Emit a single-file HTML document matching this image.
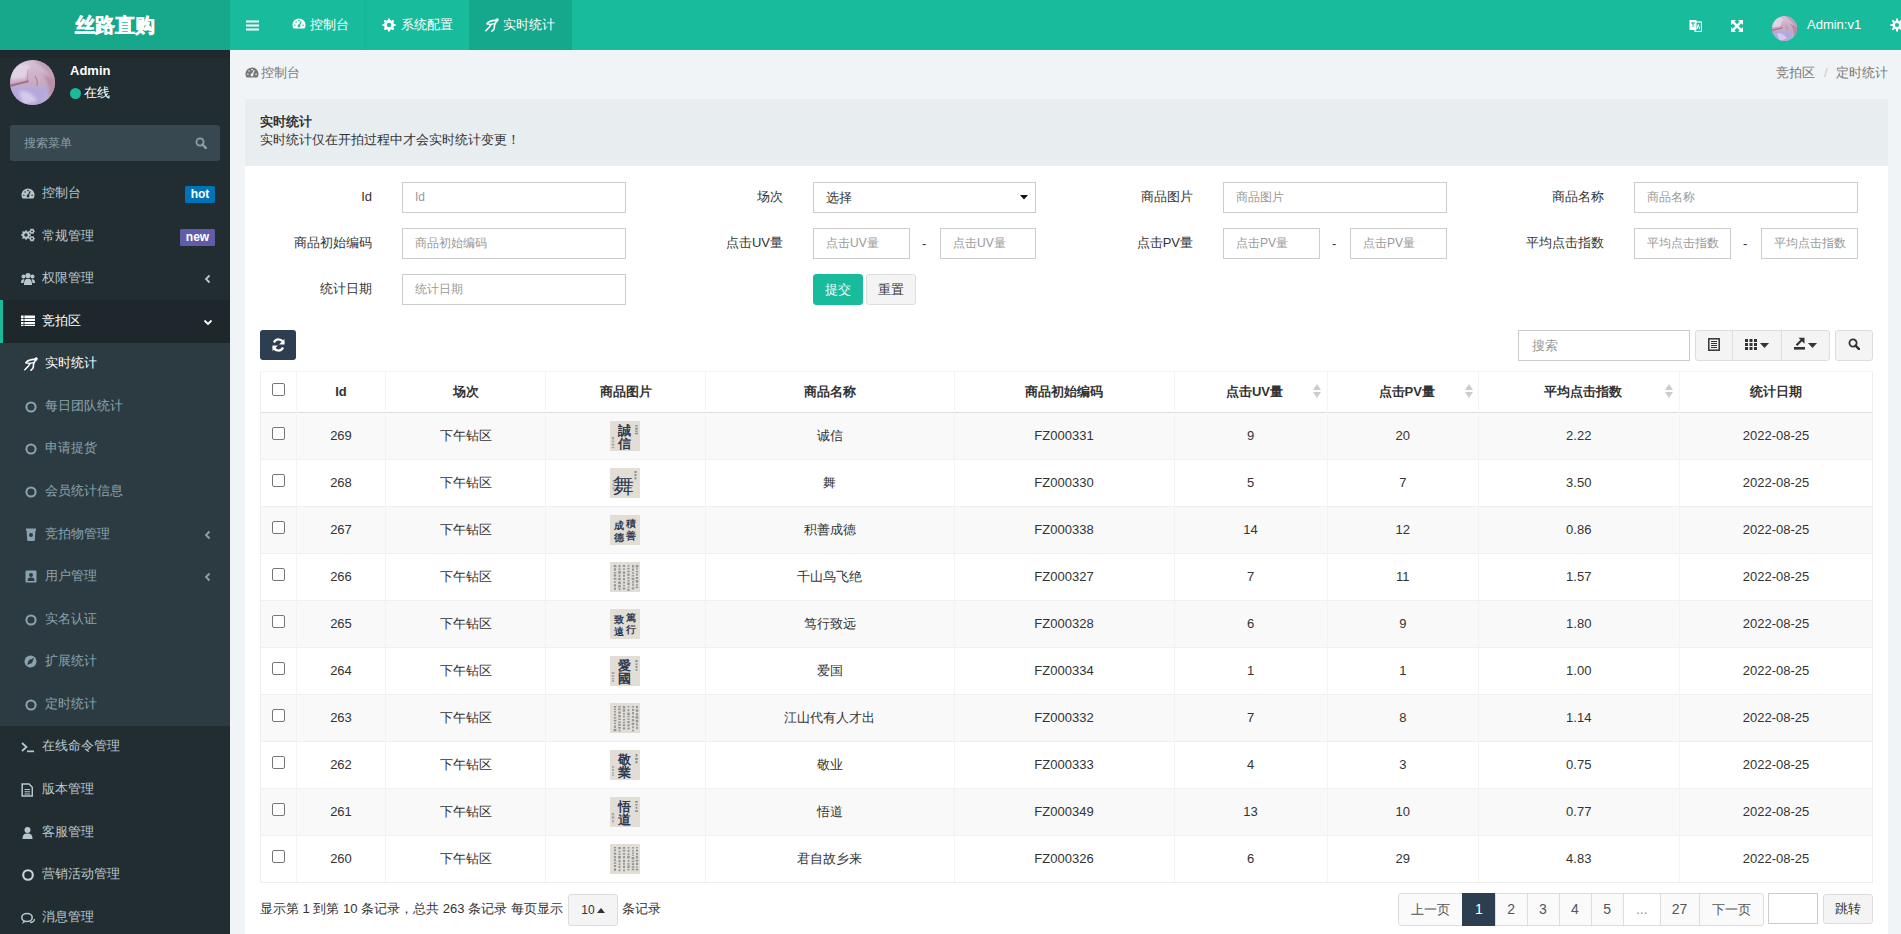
<!DOCTYPE html>
<html><head><meta charset="utf-8">
<style>
*{box-sizing:border-box}
html,body{margin:0;padding:0;width:1901px;height:934px;overflow:hidden}
body{font-family:"Liberation Sans",sans-serif;font-size:13px;color:#333;background:#f1f4f6;position:relative}
.abs{position:absolute}
svg{display:block}
#header{left:0;top:0;width:1901px;height:50px;background:#18bc9c}
#logo{left:0;top:0;width:230px;height:50px;background:#17a88b;color:#fff;font-size:20px;font-weight:bold;-webkit-text-stroke:0.5px #fff;text-align:center;line-height:50px;letter-spacing:0px}
.navt{top:0;height:50px;line-height:50px;color:#fff;font-size:13px;white-space:nowrap}
#sidebar{left:0;top:50px;width:230px;height:884px;background:#222d32}
.mi{left:0;width:230px;height:42.57px;line-height:42.57px;color:#b8c7ce;white-space:nowrap}
.mi .t{position:absolute;left:42px;top:0}
.mi .ic{position:absolute;left:21px;top:15px}
.sub .t{left:45px;color:#8aa4af}
.sub .ic{left:24px}
.badge{position:absolute;height:17px;line-height:17px;font-size:12px;font-weight:bold;color:#fff;text-align:center;border-radius:1.5px;top:14px}
.chev{position:absolute;left:204px;top:17px}
#content{left:230px;top:50px;width:1671px;height:884px;background:#f1f4f6}
.lbl{height:31px;line-height:30px;text-align:right;color:#333;white-space:nowrap}
.inp{height:31px;border:1px solid #ccc;background:#fff;line-height:29px;padding-left:12px;color:#999;font-size:12px;white-space:nowrap;overflow:hidden}
.dash{line-height:31px;height:31px;color:#333}
.tbl{border:1px solid #eee;border-top-color:#f4f4f4;background:#fff}
.vl{width:1px;background:#f3f3f3}
.cb{width:13px;height:13px;border:1px solid #767676;border-radius:2px;background:#fff}
.th{height:40px;line-height:40px;text-align:center;font-weight:bold;color:#333;white-space:nowrap}
.td{height:46px;line-height:46px;text-align:center;color:#333;white-space:nowrap}
.sorti{width:10px;height:16px}
.sorti:before{content:"";position:absolute;left:1px;top:1px;border-left:4.5px solid transparent;border-right:4.5px solid transparent;border-bottom:6px solid #ccc}
.sorti:after{content:"";position:absolute;left:1px;top:9px;border-left:4.5px solid transparent;border-right:4.5px solid transparent;border-top:6px solid #ccc}
.thumb{width:30px;height:30px;background:#dcd8cf;color:#2d3a55;font-family:"Liberation Serif",serif;font-weight:bold;text-align:center;overflow:hidden}
.thumb.big2{font-size:13px;line-height:13px;padding-top:2px}
.thumb.big1{font-size:24px;line-height:30px}
.thumb.grid{font-size:9px;line-height:11px;padding-top:4px;letter-spacing:2px}
.thumb.small,.thumb.small2{background:#d9d6d0 repeating-linear-gradient(90deg,transparent 0 4px,rgba(40,50,70,.45) 4px 5px,transparent 5px 7px)}
.btn{height:31px;line-height:29px;text-align:center;border:1px solid #ddd;background:#f4f4f4;color:#333;border-radius:3px}
.pg{top:893px;height:33px;line-height:31px;text-align:center;border:1px solid #ddd;background:#fafafa;color:#555;font-size:14px}

</style></head><body>
<div id="header" class="abs">
<div id="logo" class="abs">丝路直购</div>
<svg class="abs" style="left:246px;top:20px" width="13" height="11" viewBox="0 0 13 11"><rect x="0" y="0.5" width="13" height="2" fill="#fff"/><rect x="0" y="4.5" width="13" height="2" fill="#fff"/><rect x="0" y="8.5" width="13" height="2" fill="#fff"/></svg>
<div class="abs" style="left:365px;top:0;width:1px;height:50px;background:rgba(0,0,0,0.04)"></div>
<div class="abs" style="left:469px;top:0;width:103px;height:50px;background:rgba(0,0,0,0.1)"></div>
<svg class="abs" style="left:292px;top:18px" width="14" height="11" viewBox="0 0 14 11"><path fill="#fff" d="M1.52,10.5 A6.5,6.5 0 1 1 12.48,10.5 Z"/><circle cx="7" cy="8" r="1.4" fill="#18bc9c"/><path d="M7,8 L9.2,3.2" stroke="#18bc9c" stroke-width="1.2"/><circle cx="2.9" cy="7.3" r="0.8" fill="#18bc9c"/><circle cx="4.1" cy="4" r="0.8" fill="#18bc9c"/><circle cx="7" cy="2.6" r="0.8" fill="#18bc9c"/><circle cx="11.1" cy="7.3" r="0.8" fill="#18bc9c"/></svg>
<div class="abs navt" style="left:310px">控制台</div>
<svg class="abs" style="left:382px;top:18px" width="14" height="14" viewBox="0 0 14 14"><path fill="#fff" fill-rule="evenodd" d="M11.98,5.91 L13.54,6.10 L13.54,7.90 L11.98,8.09 L11.30,9.75 L12.26,10.98 L10.98,12.26 L9.75,11.30 L8.09,11.98 L7.90,13.54 L6.10,13.54 L5.91,11.98 L4.25,11.30 L3.02,12.26 L1.74,10.98 L2.70,9.75 L2.02,8.09 L0.46,7.90 L0.46,6.10 L2.02,5.91 L2.70,4.25 L1.74,3.02 L3.02,1.74 L4.25,2.70 L5.91,2.02 L6.10,0.46 L7.90,0.46 L8.09,2.02 L9.75,2.70 L10.98,1.74 L12.26,3.02 L11.30,4.25Z M9.20,7.00 A2.2,2.2 0 1 0 4.80,7.00 A2.2,2.2 0 1 0 9.20,7.00Z"/></svg>
<div class="abs navt" style="left:401px">系统配置</div>
<svg class="abs" style="left:485px;top:18px" width="14" height="14" viewBox="0 0 14 14"><path d="M2,5.8 C3.6,3.4 6.4,2.4 10.6,2.4" fill="none" stroke="#fff" stroke-width="1.6" stroke-linecap="round"/><path d="M10.2,1.6 L12.4,0 L14,1.8 L12.2,4.2 Z" fill="#fff"/><path d="M11.4,3.4 C10.2,5.6 9,6.8 9.4,8.8 C9.6,10.6 8.6,12 7,13.2" fill="none" stroke="#fff" stroke-width="1.6" stroke-linecap="round"/><path d="M6.2,6.4 C5,8.6 3.2,10.6 0.8,12.8" fill="none" stroke="#fff" stroke-width="1.5" stroke-linecap="round"/><path d="M2,5.8 C4.4,6.6 6.8,6.4 9.6,5.6" fill="none" stroke="#fff" stroke-width="1.2" stroke-linecap="round"/></svg>
<div class="abs navt" style="left:503px">实时统计</div>
<svg class="abs" style="left:1689px;top:19px" width="13" height="13" viewBox="0 0 13 13"><rect x="0.5" y="1" width="7" height="10" fill="#fff"/><rect x="6" y="3" width="6.5" height="9.5" fill="none" stroke="#fff" stroke-width="1.2"/><path d="M2,4 h4 M4,3 v5" stroke="#18bc9c" stroke-width="1"/><path d="M8,10 L9.3,5.5 L10.6,10" stroke="#fff" stroke-width="1" fill="none"/></svg>
<svg class="abs" style="left:1731px;top:20px" width="12" height="12" viewBox="0 0 12 12"><path d="M2.2,2.2 L9.8,9.8 M9.8,2.2 L2.2,9.8" stroke="#fff" stroke-width="2.4"/><path fill="#fff" d="M0,0 H5 L0,5Z M12,0 V5 L7,0Z M0,12 V7 L5,12Z M12,12 H7 L12,7Z"/></svg>
<svg class="abs" style="left:1772px;top:15.5px" width="25" height="25" viewBox="0 0 100 100"><defs><clipPath id="a2"><circle cx="50" cy="50" r="50"/></clipPath><filter id="a2f"><feGaussianBlur stdDeviation="3"/></filter><linearGradient id="a2g" x1="0" y1="0" x2="0" y2="1"><stop offset="0" stop-color="#d6c2d8"/><stop offset="0.5" stop-color="#c9aac2"/><stop offset="0.65" stop-color="#b8acd6"/><stop offset="1" stop-color="#c0b4de"/></linearGradient></defs><g clip-path="url(#a2)"><rect width="100" height="100" fill="url(#a2g)"/><g filter="url(#a2f)"><path d="M50,0 C75,15 92,35 100,65 L100,0Z" fill="#c59cb2"/><path d="M70,30 C85,45 90,65 85,95 L100,100 L100,45Z" fill="#b98ca6"/><path d="M5,15 C20,5 40,5 45,15 L35,40 L0,45Z" fill="#e2d2e6"/><path d="M0,62 C30,58 55,66 80,62 L75,100 L0,100Z" fill="#b5a8dc"/><path d="M20,70 C35,65 50,75 60,90 L30,100Z" fill="#d4cbea"/></g><path d="M0,55 L40,45 L42,49 L0,60Z" fill="#9a6374" opacity="0.8"/><path d="M55,35 C60,42 62,50 60,58" fill="none" stroke="#a07084" stroke-width="2.5" opacity="0.7"/><path d="M40,20 L38,50" stroke="#8d6a7a" stroke-width="1.5" opacity="0.6"/></g></svg>
<div class="abs navt" style="left:1807px;font-size:13px">Admin:v1</div>
<svg class="abs" style="left:1890px;top:18px" width="15" height="14" viewBox="0 0 15 14"><path fill="#fff" fill-rule="evenodd" d="M11.49,6.01 L13.54,6.10 L13.54,7.90 L11.49,7.99 L10.87,9.48 L12.26,10.98 L10.98,12.26 L9.48,10.87 L7.99,11.49 L7.90,13.54 L6.10,13.54 L6.01,11.49 L4.52,10.87 L3.02,12.26 L1.74,10.98 L3.13,9.48 L2.51,7.99 L0.46,7.90 L0.46,6.10 L2.51,6.01 L3.13,4.52 L1.74,3.02 L3.02,1.74 L4.52,3.13 L6.01,2.51 L6.10,0.46 L7.90,0.46 L7.99,2.51 L9.48,3.13 L10.98,1.74 L12.26,3.02 L10.87,4.52Z M9.10,7.00 A2.1,2.1 0 1 0 4.90,7.00 A2.1,2.1 0 1 0 9.10,7.00Z"/></svg>
</div>
<div id="sidebar" class="abs"></div>
<div class="abs" style="left:0;top:50px;width:230px;height:8px;background:#1f292d"></div>
<svg class="abs" style="left:10px;top:60px" width="45" height="45" viewBox="0 0 100 100"><defs><clipPath id="a1"><circle cx="50" cy="50" r="50"/></clipPath><filter id="a1f"><feGaussianBlur stdDeviation="3"/></filter><linearGradient id="a1g" x1="0" y1="0" x2="0" y2="1"><stop offset="0" stop-color="#d6c2d8"/><stop offset="0.5" stop-color="#c9aac2"/><stop offset="0.65" stop-color="#b8acd6"/><stop offset="1" stop-color="#c0b4de"/></linearGradient></defs><g clip-path="url(#a1)"><rect width="100" height="100" fill="url(#a1g)"/><g filter="url(#a1f)"><path d="M50,0 C75,15 92,35 100,65 L100,0Z" fill="#c59cb2"/><path d="M70,30 C85,45 90,65 85,95 L100,100 L100,45Z" fill="#b98ca6"/><path d="M5,15 C20,5 40,5 45,15 L35,40 L0,45Z" fill="#e2d2e6"/><path d="M0,62 C30,58 55,66 80,62 L75,100 L0,100Z" fill="#b5a8dc"/><path d="M20,70 C35,65 50,75 60,90 L30,100Z" fill="#d4cbea"/></g><path d="M0,55 L40,45 L42,49 L0,60Z" fill="#9a6374" opacity="0.8"/><path d="M55,35 C60,42 62,50 60,58" fill="none" stroke="#a07084" stroke-width="2.5" opacity="0.7"/><path d="M40,20 L38,50" stroke="#8d6a7a" stroke-width="1.5" opacity="0.6"/></g></svg>
<div class="abs" style="left:70px;top:62px;color:#fff;font-weight:bold;font-size:13px;line-height:18px">Admin</div>
<div class="abs" style="left:70px;top:88px;width:11px;height:11px;border-radius:50%;background:#18bc9c"></div>
<div class="abs" style="left:84px;top:84px;color:#fff;font-size:13px;line-height:18px">在线</div>
<div class="abs" style="left:10px;top:125px;width:210px;height:36px;border-radius:3px;background:#374850"></div>
<div class="abs" style="left:24px;top:134px;color:#8aa0a9;font-size:12px;line-height:18px">搜索菜单</div>
<svg class="abs" style="left:195px;top:137px" width="12" height="12" viewBox="0 0 12 12"><circle cx="5.04" cy="5.04" r="3.5999999999999996" fill="none" stroke="#8aa0a9" stroke-width="1.7999999999999998"/><path d="M7.5600000000000005,7.5600000000000005 L11.040000000000001,11.040000000000001" stroke="#8aa0a9" stroke-width="2.4000000000000004" stroke-linecap="round"/></svg>
<div class="abs" style="left:0;top:300.0px;width:230px;height:42.57px;background:#1e282c"></div>
<div class="abs" style="left:0;top:300.0px;width:3px;height:42.57px;background:#18bc9c"></div>
<div class="abs" style="left:0;top:342.57px;width:230px;height:383.14px;background:#2c3b41"></div>
<div class="abs mi" style="top:172.00px"><div class="t" style="color:#b8c7ce">控制台</div><svg style="position:absolute;left:21px;top:16px" width="14" height="11" viewBox="0 0 14 11"><path fill="#b8c7ce" d="M1.52,10.5 A6.5,6.5 0 1 1 12.48,10.5 Z"/><circle cx="7" cy="8" r="1.4" fill="#222d32"/><path d="M7,8 L9.2,3.2" stroke="#222d32" stroke-width="1.2"/><circle cx="2.9" cy="7.3" r="0.8" fill="#222d32"/><circle cx="4.1" cy="4" r="0.8" fill="#222d32"/><circle cx="7" cy="2.6" r="0.8" fill="#222d32"/><circle cx="11.1" cy="7.3" r="0.8" fill="#222d32"/></svg><div class="badge" style="left:185px;width:30px;background:#0073b7">hot</div></div>
<div class="abs mi" style="top:214.57px"><div class="t" style="color:#b8c7ce">常规管理</div><svg style="position:absolute;left:21px;top:13.5px" width="14" height="14" viewBox="0 0 14 14"><path fill="#b8c7ce" fill-rule="evenodd" d="M8.81,6.16 L9.85,6.33 L9.85,7.67 L8.81,7.84 L8.28,9.10 L8.91,9.96 L7.96,10.91 L7.10,10.28 L5.84,10.81 L5.67,11.85 L4.33,11.85 L4.16,10.81 L2.90,10.28 L2.04,10.91 L1.09,9.96 L1.72,9.10 L1.19,7.84 L0.15,7.67 L0.15,6.33 L1.19,6.16 L1.72,4.90 L1.09,4.04 L2.04,3.09 L2.90,3.72 L4.16,3.19 L4.33,2.15 L5.67,2.15 L5.84,3.19 L7.10,3.72 L7.96,3.09 L8.91,4.04 L8.28,4.90Z M6.70,7.00 A1.7,1.7 0 1 0 3.30,7.00 A1.7,1.7 0 1 0 6.70,7.00Z"/><path fill="#b8c7ce" fill-rule="evenodd" d="M13.21,2.65 L13.85,2.77 L13.85,3.83 L13.21,3.95 L12.67,4.88 L12.88,5.51 L11.97,6.03 L11.54,5.54 L10.46,5.54 L10.03,6.03 L9.12,5.51 L9.33,4.88 L8.79,3.95 L8.15,3.83 L8.15,2.77 L8.79,2.65 L9.33,1.72 L9.12,1.09 L10.03,0.57 L10.46,1.06 L11.54,1.06 L11.97,0.57 L12.88,1.09 L12.67,1.72Z M11.90,3.30 A0.9,0.9 0 1 0 10.10,3.30 A0.9,0.9 0 1 0 11.90,3.30Z"/><path fill="#b8c7ce" fill-rule="evenodd" d="M13.21,10.05 L13.85,10.17 L13.85,11.23 L13.21,11.35 L12.67,12.28 L12.88,12.91 L11.97,13.43 L11.54,12.94 L10.46,12.94 L10.03,13.43 L9.12,12.91 L9.33,12.28 L8.79,11.35 L8.15,11.23 L8.15,10.17 L8.79,10.05 L9.33,9.12 L9.12,8.49 L10.03,7.97 L10.46,8.46 L11.54,8.46 L11.97,7.97 L12.88,8.49 L12.67,9.12Z M11.90,10.70 A0.9,0.9 0 1 0 10.10,10.70 A0.9,0.9 0 1 0 11.90,10.70Z"/></svg><div class="badge" style="left:180px;width:35px;background:#605ca8">new</div></div>
<div class="abs mi" style="top:257.14px"><div class="t" style="color:#b8c7ce">权限管理</div><svg style="position:absolute;left:21px;top:15px" width="14" height="14" viewBox="0 0 14 14"><circle cx="7" cy="3.5" r="2.6" fill="#b8c7ce"/><circle cx="2.5" cy="4.5" r="2" fill="#b8c7ce"/><circle cx="11.5" cy="4.5" r="2" fill="#b8c7ce"/><path fill="#b8c7ce" d="M3,13 C3,8 4.5,6.8 7,6.8 C9.5,6.8 11,8 11,13Z M0,11 C0,8 0.8,7.2 2.5,7.2 L3.5,7.4 C2.8,8.5 2.6,9.5 2.6,11Z M14,11 C14,8 13.2,7.2 11.5,7.2 L10.5,7.4 C11.2,8.5 11.4,9.5 11.4,11Z"/></svg><div class="chev"><svg style="left:0px;top:0px" width="7" height="10" viewBox="0 0 7 10"><path d="M5.5,1.5 L2,5 L5.5,8.5" fill="none" stroke="#b8c7ce" stroke-width="1.8"/></svg></div></div>
<div class="abs mi" style="top:299.71px"><div class="t" style="color:#fff">竞拍区</div><svg style="position:absolute;left:21px;top:15px" width="14" height="12" viewBox="0 0 14 12"><path fill="#fff" d="M0,0.5h2.6v2.4H0z M3.4,0.5h10.6v2.4H3.4z M0,3.7h2.6v2.4H0z M3.4,3.7h10.6v2.4H3.4z M0,6.9h2.6v2.4H0z M3.4,6.9h10.6v2.4H3.4z M0,10.1h2.6v0.9H0z M3.4,10.1h10.6v0.9H3.4z"/></svg><div class="chev" style="left:203px;top:19px"><svg style="left:0px;top:0px" width="10" height="7" viewBox="0 0 10 7"><path d="M1.5,1.5 L5,5 L8.5,1.5" fill="none" stroke="#fff" stroke-width="1.8"/></svg></div></div>
<div class="abs mi sub" style="top:342.28px"><div class="t" style="color:#fff">实时统计</div><svg style="position:absolute;left:24px;top:15px" width="14" height="14" viewBox="0 0 14 14"><path d="M2,5.8 C3.6,3.4 6.4,2.4 10.6,2.4" fill="none" stroke="#fff" stroke-width="1.6" stroke-linecap="round"/><path d="M10.2,1.6 L12.4,0 L14,1.8 L12.2,4.2 Z" fill="#fff"/><path d="M11.4,3.4 C10.2,5.6 9,6.8 9.4,8.8 C9.6,10.6 8.6,12 7,13.2" fill="none" stroke="#fff" stroke-width="1.6" stroke-linecap="round"/><path d="M6.2,6.4 C5,8.6 3.2,10.6 0.8,12.8" fill="none" stroke="#fff" stroke-width="1.5" stroke-linecap="round"/><path d="M2,5.8 C4.4,6.6 6.8,6.4 9.6,5.6" fill="none" stroke="#fff" stroke-width="1.2" stroke-linecap="round"/></svg></div>
<div class="abs mi sub" style="top:384.86px"><div class="t" style="color:#8aa4af">每日团队统计</div><svg style="position:absolute;left:25px;top:16px" width="12" height="12" viewBox="0 0 12 12"><circle cx="6" cy="6" r="4.6" fill="none" stroke="#8aa4af" stroke-width="2"/></svg></div>
<div class="abs mi sub" style="top:427.43px"><div class="t" style="color:#8aa4af">申请提货</div><svg style="position:absolute;left:25px;top:16px" width="12" height="12" viewBox="0 0 12 12"><circle cx="6" cy="6" r="4.6" fill="none" stroke="#8aa4af" stroke-width="2"/></svg></div>
<div class="abs mi sub" style="top:470.00px"><div class="t" style="color:#8aa4af">会员统计信息</div><svg style="position:absolute;left:25px;top:16px" width="12" height="12" viewBox="0 0 12 12"><circle cx="6" cy="6" r="4.6" fill="none" stroke="#8aa4af" stroke-width="2"/></svg></div>
<div class="abs mi sub" style="top:512.57px"><div class="t" style="color:#8aa4af">竞拍物管理</div><svg style="position:absolute;left:25px;top:15px" width="12" height="14" viewBox="0 0 12 14"><path fill="#8aa4af" d="M1.5,1.5 H10.5 L9.8,12 C9.7,12.7 9.2,13 8.5,13 H3.5 C2.8,13 2.3,12.7 2.2,12Z"/><circle cx="6" cy="7" r="2" fill="#2c3b41"/><rect x="1" y="0.5" width="10" height="2" fill="#8aa4af"/></svg><div class="chev"><svg style="left:0px;top:0px" width="7" height="10" viewBox="0 0 7 10"><path d="M5.5,1.5 L2,5 L5.5,8.5" fill="none" stroke="#8aa4af" stroke-width="1.8"/></svg></div></div>
<div class="abs mi sub" style="top:555.14px"><div class="t" style="color:#8aa4af">用户管理</div><svg style="position:absolute;left:25px;top:15px" width="12" height="13" viewBox="0 0 12 13"><rect x="0.5" y="0.5" width="11" height="12" rx="1" fill="#8aa4af"/><circle cx="6" cy="5" r="2" fill="#2c3b41"/><path d="M2.5,11 C2.5,8 4,7.5 6,7.5 C8,7.5 9.5,8 9.5,11Z" fill="#2c3b41"/></svg><div class="chev"><svg style="left:0px;top:0px" width="7" height="10" viewBox="0 0 7 10"><path d="M5.5,1.5 L2,5 L5.5,8.5" fill="none" stroke="#8aa4af" stroke-width="1.8"/></svg></div></div>
<div class="abs mi sub" style="top:597.71px"><div class="t" style="color:#8aa4af">实名认证</div><svg style="position:absolute;left:25px;top:16px" width="12" height="12" viewBox="0 0 12 12"><circle cx="6" cy="6" r="4.6" fill="none" stroke="#8aa4af" stroke-width="2"/></svg></div>
<div class="abs mi sub" style="top:640.28px"><div class="t" style="color:#8aa4af">扩展统计</div><svg style="position:absolute;left:24px;top:15px" width="13" height="13" viewBox="0 0 13 13"><circle cx="6.5" cy="6.5" r="6" fill="#8aa4af"/><path d="M3,10 L5,5 L10,3 L8,8Z" fill="#2c3b41"/></svg></div>
<div class="abs mi sub" style="top:682.85px"><div class="t" style="color:#8aa4af">定时统计</div><svg style="position:absolute;left:25px;top:16px" width="12" height="12" viewBox="0 0 12 12"><circle cx="6" cy="6" r="4.6" fill="none" stroke="#8aa4af" stroke-width="2"/></svg></div>
<div class="abs mi" style="top:725.42px"><div class="t" style="color:#b8c7ce">在线命令管理</div><svg style="position:absolute;left:21px;top:16px" width="14" height="12" viewBox="0 0 14 12"><path d="M1,2 L5.5,6 L1,10" fill="none" stroke="#b8c7ce" stroke-width="1.7"/><rect x="6" y="9.5" width="7" height="1.7" fill="#b8c7ce"/></svg></div>
<div class="abs mi" style="top:767.99px"><div class="t" style="color:#b8c7ce">版本管理</div><svg style="position:absolute;left:21px;top:15px" width="12" height="14" viewBox="0 0 12 14"><path d="M1.2,1 H8 L11.3,4.3 V13 H1.2Z" fill="none" stroke="#b8c7ce" stroke-width="1.5"/><path d="M3.5,6.5 H9 M3.5,8.8 H9 M3.5,11 H9" stroke="#b8c7ce" stroke-width="1.1"/></svg></div>
<div class="abs mi" style="top:810.56px"><div class="t" style="color:#b8c7ce">客服管理</div><svg style="position:absolute;left:22px;top:15px" width="11" height="14" viewBox="0 0 11 14"><circle cx="5.5" cy="4" r="3" fill="#b8c7ce"/><path d="M0.5,13 C0.5,8.5 2.5,7.5 5.5,7.5 C8.5,7.5 10.5,8.5 10.5,13Z" fill="#b8c7ce"/></svg></div>
<div class="abs mi" style="top:853.14px"><div class="t" style="color:#b8c7ce">营销活动管理</div><svg style="position:absolute;left:22px;top:16px" width="12" height="12" viewBox="0 0 12 12"><circle cx="6" cy="6" r="4.8" fill="none" stroke="#c8d4d9" stroke-width="2.1"/></svg></div>
<div class="abs mi" style="top:895.71px"><div class="t" style="color:#b8c7ce">消息管理</div><svg style="position:absolute;left:21px;top:16px" width="14" height="13" viewBox="0 0 14 13"><ellipse cx="6" cy="5.5" rx="5.2" ry="4" fill="none" stroke="#b8c7ce" stroke-width="1.6"/><path d="M2.5,8.5 L1,12 L5,9.5" fill="#b8c7ce"/><path d="M9,10.5 C11,10.5 13.5,9.5 13.5,7" fill="none" stroke="#b8c7ce" stroke-width="1.4"/></svg></div>
<div class="abs" style="left:230px;top:50px;width:1671px;height:884px;background:#f1f4f6"></div>
<svg class="abs" style="left:245px;top:67px" width="14" height="11" viewBox="0 0 14 11"><path fill="#777" d="M1.52,10.5 A6.5,6.5 0 1 1 12.48,10.5 Z"/><circle cx="7" cy="8" r="1.4" fill="#f1f4f6"/><path d="M7,8 L9.2,3.2" stroke="#f1f4f6" stroke-width="1.2"/><circle cx="2.9" cy="7.3" r="0.8" fill="#f1f4f6"/><circle cx="4.1" cy="4" r="0.8" fill="#f1f4f6"/><circle cx="7" cy="2.6" r="0.8" fill="#f1f4f6"/><circle cx="11.1" cy="7.3" r="0.8" fill="#f1f4f6"/></svg>
<div class="abs" style="left:261px;top:64px;color:#777;line-height:18px">控制台</div>
<div class="abs" style="left:1776px;top:64px;color:#777;line-height:18px;white-space:nowrap">竞拍区</div>
<div class="abs" style="left:1824px;top:64px;color:#ccc;line-height:18px">/</div>
<div class="abs" style="left:1836px;top:64px;color:#777;line-height:18px;white-space:nowrap">定时统计</div>
<div class="abs" style="left:245px;top:99px;width:1643px;height:67px;background:#e8edf0"></div>
<div class="abs" style="left:245px;top:166px;width:1643px;height:768px;background:#fff"></div>
<div class="abs" style="left:260px;top:113px;font-weight:bold;line-height:18px">实时统计</div>
<div class="abs" style="left:260px;top:131px;line-height:18px">实时统计仅在开拍过程中才会实时统计变更！</div>
<div class="abs lbl" style="left:172px;top:182px;width:200px">Id</div>
<div class="abs inp" style="left:402px;top:182px;width:224px">Id</div>
<div class="abs lbl" style="left:583px;top:182px;width:200px">场次</div>
<div class="abs inp" style="left:813px;top:182px;width:223px"><span style="color:#333;font-size:13px">选择</span></div>
<svg class="abs" style="left:1020px;top:195px" width="8" height="4.5" viewBox="0 0 8 4.5"><path d="M0,0 H8 L4,4.5Z" fill="#111"/></svg>
<div class="abs lbl" style="left:993px;top:182px;width:200px">商品图片</div>
<div class="abs inp" style="left:1223px;top:182px;width:224px">商品图片</div>
<div class="abs lbl" style="left:1404px;top:182px;width:200px">商品名称</div>
<div class="abs inp" style="left:1634px;top:182px;width:224px">商品名称</div>
<div class="abs lbl" style="left:172px;top:228px;width:200px">商品初始编码</div>
<div class="abs inp" style="left:402px;top:228px;width:224px">商品初始编码</div>
<div class="abs lbl" style="left:583px;top:228px;width:200px">点击UV量</div>
<div class="abs inp" style="left:813px;top:228px;width:97px">点击UV量</div>
<div class="abs dash" style="left:922px;top:228px">-</div>
<div class="abs inp" style="left:940px;top:228px;width:96px">点击UV量</div>
<div class="abs lbl" style="left:993px;top:228px;width:200px">点击PV量</div>
<div class="abs inp" style="left:1223px;top:228px;width:97px">点击PV量</div>
<div class="abs dash" style="left:1332px;top:228px">-</div>
<div class="abs inp" style="left:1350px;top:228px;width:97px">点击PV量</div>
<div class="abs lbl" style="left:1404px;top:228px;width:200px">平均点击指数</div>
<div class="abs inp" style="left:1634px;top:228px;width:97px">平均点击指数</div>
<div class="abs dash" style="left:1743px;top:228px">-</div>
<div class="abs inp" style="left:1761px;top:228px;width:97px">平均点击指数</div>
<div class="abs lbl" style="left:172px;top:274px;width:200px">统计日期</div>
<div class="abs inp" style="left:402px;top:274px;width:224px">统计日期</div>
<div class="abs btn" style="left:813px;top:274px;width:50px;background:#18bc9c;border-color:#18bc9c;color:#fff">提交</div>
<div class="abs btn" style="left:866px;top:274px;width:50px">重置</div>
<div class="abs" style="left:260px;top:330px;width:36px;height:30px;background:#2c3e50;border-radius:3px"></div>
<svg class="abs" style="left:272px;top:338px" width="13" height="14" viewBox="0 0 13 14"><path d="M11.5,5.5 A5,5 0 0 0 2,4.5" fill="none" stroke="#fff" stroke-width="2.2"/><path d="M12.5,1 V6.5 H7Z" fill="#fff"/><path d="M1.5,8.5 A5,5 0 0 0 11,9.5" fill="none" stroke="#fff" stroke-width="2.2"/><path d="M0.5,13 V7.5 H6Z" fill="#fff"/></svg>
<div class="abs inp" style="left:1518px;top:330px;width:172px;height:31px;font-size:13px;padding-left:13px">搜索</div>
<div class="abs btn" style="left:1695px;top:330px;width:135px;height:31px"></div>
<div class="abs" style="left:1732px;top:331px;width:1px;height:29px;background:#ddd"></div>
<div class="abs" style="left:1781px;top:331px;width:1px;height:29px;background:#ddd"></div>
<div class="abs btn" style="left:1835px;top:330px;width:38px;height:31px"></div>
<svg class="abs" style="left:1708px;top:338px" width="12" height="13" viewBox="0 0 12 13"><rect x="0.8" y="0.8" width="10.4" height="11.4" fill="none" stroke="#333" stroke-width="1.5"/><path d="M3,3.5 H9 M3,5.5 H9 M3,7.5 H9 M3,9.5 H9" stroke="#333" stroke-width="1"/></svg>
<svg class="abs" style="left:1745px;top:339px" width="12" height="11" viewBox="0 0 12 11"><path fill="#333" d="M0,0h3v3H0z M4.5,0h3v3h-3z M9,0h3v3H9z M0,4h3v3H0z M4.5,4h3v3h-3z M9,4h3v3H9z M0,8h3v3H0z M4.5,8h3v3h-3z M9,8h3v3H9z"/></svg>
<svg class="abs" style="left:1760px;top:343px" width="9" height="5" viewBox="0 0 9 5"><path d="M0,0 H9 L4.5,5Z" fill="#333"/></svg>
<svg class="abs" style="left:1793px;top:337px" width="13" height="13" viewBox="0 0 13 13"><rect x="1" y="10" width="11" height="2.6" fill="#333"/><path d="M3.5,8.2 L9.5,2.2" stroke="#333" stroke-width="2.2"/><path d="M5.5,0.8 H11.5 V6.8Z" fill="#333"/></svg>
<svg class="abs" style="left:1808px;top:343px" width="9" height="5" viewBox="0 0 9 5"><path d="M0,0 H9 L4.5,5Z" fill="#333"/></svg>
<svg class="abs" style="left:1848px;top:338px" width="12" height="12" viewBox="0 0 12 12"><circle cx="5.04" cy="5.04" r="3.5999999999999996" fill="none" stroke="#333" stroke-width="1.7999999999999998"/><path d="M7.5600000000000005,7.5600000000000005 L11.040000000000001,11.040000000000001" stroke="#333" stroke-width="2.4000000000000004" stroke-linecap="round"/></svg>
<div class="abs tbl" style="left:260px;top:371px;width:1613px;height:512px"></div>
<div class="abs" style="left:261px;top:412.5px;width:1611px;height:46.5px;background:#f9f9f9"></div>
<div class="abs" style="left:261px;top:459.0px;width:1611px;height:1px;background:#f0f0f0"></div>
<div class="abs" style="left:261px;top:506.0px;width:1611px;height:1px;background:#f0f0f0"></div>
<div class="abs" style="left:261px;top:506.5px;width:1611px;height:46.5px;background:#f9f9f9"></div>
<div class="abs" style="left:261px;top:553.0px;width:1611px;height:1px;background:#f0f0f0"></div>
<div class="abs" style="left:261px;top:600.0px;width:1611px;height:1px;background:#f0f0f0"></div>
<div class="abs" style="left:261px;top:600.5px;width:1611px;height:46.5px;background:#f9f9f9"></div>
<div class="abs" style="left:261px;top:647.0px;width:1611px;height:1px;background:#f0f0f0"></div>
<div class="abs" style="left:261px;top:694.0px;width:1611px;height:1px;background:#f0f0f0"></div>
<div class="abs" style="left:261px;top:694.5px;width:1611px;height:46.5px;background:#f9f9f9"></div>
<div class="abs" style="left:261px;top:741.0px;width:1611px;height:1px;background:#f0f0f0"></div>
<div class="abs" style="left:261px;top:788.0px;width:1611px;height:1px;background:#f0f0f0"></div>
<div class="abs" style="left:261px;top:788.5px;width:1611px;height:46.5px;background:#f9f9f9"></div>
<div class="abs" style="left:261px;top:835.0px;width:1611px;height:1px;background:#f0f0f0"></div>
<div class="abs" style="left:261px;top:411.5px;width:1611px;height:1px;background:#ddd"></div>
<div class="abs cb" style="left:272px;top:383px"></div>
<div class="abs vl" style="left:296.0px;top:372px;height:510px"></div>
<div class="abs th" style="left:296.5px;top:372px;width:89.0px">Id</div>
<div class="abs vl" style="left:385.0px;top:372px;height:510px"></div>
<div class="abs th" style="left:385.5px;top:372px;width:160.0px">场次</div>
<div class="abs vl" style="left:545.0px;top:372px;height:510px"></div>
<div class="abs th" style="left:545.5px;top:372px;width:160.0px">商品图片</div>
<div class="abs vl" style="left:705.0px;top:372px;height:510px"></div>
<div class="abs th" style="left:705.5px;top:372px;width:248.5px">商品名称</div>
<div class="abs vl" style="left:953.5px;top:372px;height:510px"></div>
<div class="abs th" style="left:954px;top:372px;width:220px">商品初始编码</div>
<div class="abs vl" style="left:1173.5px;top:372px;height:510px"></div>
<div class="abs th" style="left:1178px;top:372px;width:153px">点击UV量</div>
<div class="abs sorti" style="left:1312px;top:383px"></div>
<div class="abs vl" style="left:1326.5px;top:372px;height:510px"></div>
<div class="abs th" style="left:1331px;top:372px;width:151.5px">点击PV量</div>
<div class="abs sorti" style="left:1463.5px;top:383px"></div>
<div class="abs vl" style="left:1478.0px;top:372px;height:510px"></div>
<div class="abs th" style="left:1482.5px;top:372px;width:200.5px">平均点击指数</div>
<div class="abs sorti" style="left:1664px;top:383px"></div>
<div class="abs vl" style="left:1678.5px;top:372px;height:510px"></div>
<div class="abs th" style="left:1679px;top:372px;width:194px">统计日期</div>
<div class="abs cb" style="left:272px;top:427.0px"></div>
<div class="abs td" style="left:296.5px;top:412.5px;width:89.0px">269</div>
<div class="abs td" style="left:385.5px;top:412.5px;width:160.0px">下午钻区</div>
<svg class="abs" style="left:610px;top:421.0px" width="30" height="30" viewBox="0 0 30 30"><rect width="30" height="30" fill="#e2ded6"/><text x="14" y="13.5" font-size="13" font-weight="bold" text-anchor="middle" fill="#2e3a52" font-family="Liberation Serif">誠</text><text x="14" y="27" font-size="13" font-weight="bold" text-anchor="middle" fill="#2e3a52" font-family="Liberation Serif">信</text><rect x="25.37" y="4.00" width="2.25" height="1.53" fill="#2e3a52" opacity="0.5"/><rect x="25.32" y="6.63" width="2.35" height="2.05" fill="#2e3a52" opacity="0.5"/><rect x="25.20" y="9.53" width="2.60" height="1.22" fill="#2e3a52" opacity="0.5"/><rect x="25.10" y="11.75" width="2.79" height="1.53" fill="#2e3a52" opacity="0.5"/><rect x="1.91" y="16.00" width="2.17" height="2.37" fill="#2e3a52" opacity="0.35"/><rect x="1.82" y="19.68" width="2.36" height="1.41" fill="#2e3a52" opacity="0.35"/><rect x="1.76" y="22.59" width="2.49" height="1.93" fill="#2e3a52" opacity="0.35"/><rect x="1.75" y="25.86" width="2.51" height="1.29" fill="#2e3a52" opacity="0.35"/></svg>
<div class="abs td" style="left:705.5px;top:412.5px;width:248.5px">诚信</div>
<div class="abs td" style="left:954px;top:412.5px;width:220px">FZ000331</div>
<div class="abs td" style="left:1174px;top:412.5px;width:153px">9</div>
<div class="abs td" style="left:1327px;top:412.5px;width:151.5px">20</div>
<div class="abs td" style="left:1478.5px;top:412.5px;width:200.5px">2.22</div>
<div class="abs td" style="left:1679px;top:412.5px;width:194px">2022-08-25</div>
<div class="abs cb" style="left:272px;top:474.0px"></div>
<div class="abs td" style="left:296.5px;top:459.5px;width:89.0px">268</div>
<div class="abs td" style="left:385.5px;top:459.5px;width:160.0px">下午钻区</div>
<svg class="abs" style="left:610px;top:468.0px" width="30" height="30" viewBox="0 0 30 30"><rect width="30" height="30" fill="#e2ded6"/><text x="13" y="25" font-size="21" text-anchor="middle" fill="#2e3a52" font-family="Liberation Serif">舞</text><rect x="24.44" y="3.00" width="2.11" height="2.00" fill="#2e3a52" opacity="0.5"/><rect x="24.21" y="6.26" width="2.58" height="1.49" fill="#2e3a52" opacity="0.5"/><rect x="24.60" y="9.21" width="1.79" height="2.11" fill="#2e3a52" opacity="0.5"/><rect x="2.55" y="12.00" width="1.90" height="1.66" fill="#2e3a52" opacity="0.35"/><rect x="2.67" y="15.22" width="1.65" height="2.60" fill="#2e3a52" opacity="0.35"/><rect x="2.47" y="19.30" width="2.06" height="2.04" fill="#2e3a52" opacity="0.35"/></svg>
<div class="abs td" style="left:705.5px;top:459.5px;width:248.5px">舞</div>
<div class="abs td" style="left:954px;top:459.5px;width:220px">FZ000330</div>
<div class="abs td" style="left:1174px;top:459.5px;width:153px">5</div>
<div class="abs td" style="left:1327px;top:459.5px;width:151.5px">7</div>
<div class="abs td" style="left:1478.5px;top:459.5px;width:200.5px">3.50</div>
<div class="abs td" style="left:1679px;top:459.5px;width:194px">2022-08-25</div>
<div class="abs cb" style="left:272px;top:521.0px"></div>
<div class="abs td" style="left:296.5px;top:506.5px;width:89.0px">267</div>
<div class="abs td" style="left:385.5px;top:506.5px;width:160.0px">下午钻区</div>
<svg class="abs" style="left:610px;top:515.0px" width="30" height="30" viewBox="0 0 30 30"><rect width="30" height="30" fill="#e2ded6"/><text x="21" y="12" font-size="9.5" font-weight="bold" text-anchor="middle" fill="#2e3a52" font-family="Liberation Serif">積</text><text x="21" y="24" font-size="9.5" font-weight="bold" text-anchor="middle" fill="#2e3a52" font-family="Liberation Serif">善</text><text x="9" y="14" font-size="9.5" font-weight="bold" text-anchor="middle" fill="#2e3a52" font-family="Liberation Serif">成</text><text x="9" y="26" font-size="9.5" font-weight="bold" text-anchor="middle" fill="#2e3a52" font-family="Liberation Serif">德</text></svg>
<div class="abs td" style="left:705.5px;top:506.5px;width:248.5px">积善成德</div>
<div class="abs td" style="left:954px;top:506.5px;width:220px">FZ000338</div>
<div class="abs td" style="left:1174px;top:506.5px;width:153px">14</div>
<div class="abs td" style="left:1327px;top:506.5px;width:151.5px">12</div>
<div class="abs td" style="left:1478.5px;top:506.5px;width:200.5px">0.86</div>
<div class="abs td" style="left:1679px;top:506.5px;width:194px">2022-08-25</div>
<div class="abs cb" style="left:272px;top:568.0px"></div>
<div class="abs td" style="left:296.5px;top:553.5px;width:89.0px">266</div>
<div class="abs td" style="left:385.5px;top:553.5px;width:160.0px">下午钻区</div>
<svg class="abs" style="left:610px;top:562.0px" width="30" height="30" viewBox="0 0 30 30"><rect width="30" height="30" fill="#e2ded6"/><rect x="3.70" y="3.00" width="2.61" height="2.20" fill="#2e3a52" opacity="0.45"/><rect x="4.08" y="6.14" width="1.83" height="2.60" fill="#2e3a52" opacity="0.45"/><rect x="3.75" y="10.08" width="2.51" height="1.33" fill="#2e3a52" opacity="0.45"/><rect x="3.77" y="12.33" width="2.47" height="2.19" fill="#2e3a52" opacity="0.45"/><rect x="3.68" y="15.93" width="2.64" height="1.82" fill="#2e3a52" opacity="0.45"/><rect x="3.89" y="19.34" width="2.22" height="1.36" fill="#2e3a52" opacity="0.45"/><rect x="3.93" y="22.27" width="2.13" height="2.23" fill="#2e3a52" opacity="0.45"/><rect x="4.15" y="25.54" width="1.70" height="2.53" fill="#2e3a52" opacity="0.45"/><rect x="8.61" y="3.00" width="1.79" height="2.38" fill="#2e3a52" opacity="0.45"/><rect x="8.37" y="6.44" width="2.25" height="1.63" fill="#2e3a52" opacity="0.45"/><rect x="8.15" y="9.16" width="2.71" height="2.45" fill="#2e3a52" opacity="0.45"/><rect x="8.66" y="12.67" width="1.68" height="2.45" fill="#2e3a52" opacity="0.45"/><rect x="8.22" y="16.00" width="2.56" height="2.13" fill="#2e3a52" opacity="0.45"/><rect x="8.18" y="19.58" width="2.63" height="2.59" fill="#2e3a52" opacity="0.45"/><rect x="8.15" y="23.19" width="2.71" height="2.24" fill="#2e3a52" opacity="0.45"/><rect x="8.61" y="26.30" width="1.79" height="1.89" fill="#2e3a52" opacity="0.45"/><rect x="12.80" y="3.00" width="2.40" height="1.87" fill="#2e3a52" opacity="0.45"/><rect x="12.90" y="6.45" width="2.21" height="1.38" fill="#2e3a52" opacity="0.45"/><rect x="12.88" y="9.43" width="2.24" height="2.27" fill="#2e3a52" opacity="0.45"/><rect x="13.04" y="12.70" width="1.91" height="2.08" fill="#2e3a52" opacity="0.45"/><rect x="12.97" y="16.10" width="2.07" height="2.11" fill="#2e3a52" opacity="0.45"/><rect x="12.92" y="19.64" width="2.16" height="1.76" fill="#2e3a52" opacity="0.45"/><rect x="13.09" y="22.87" width="1.82" height="1.55" fill="#2e3a52" opacity="0.45"/><rect x="12.68" y="25.68" width="2.65" height="1.81" fill="#2e3a52" opacity="0.45"/><rect x="17.67" y="3.00" width="1.67" height="1.72" fill="#2e3a52" opacity="0.45"/><rect x="17.43" y="5.88" width="2.14" height="1.64" fill="#2e3a52" opacity="0.45"/><rect x="17.11" y="8.93" width="2.79" height="1.25" fill="#2e3a52" opacity="0.45"/><rect x="17.38" y="11.55" width="2.25" height="2.34" fill="#2e3a52" opacity="0.45"/><rect x="17.46" y="15.15" width="2.08" height="1.77" fill="#2e3a52" opacity="0.45"/><rect x="17.52" y="17.90" width="1.95" height="1.62" fill="#2e3a52" opacity="0.45"/><rect x="17.22" y="20.59" width="2.56" height="2.47" fill="#2e3a52" opacity="0.45"/><rect x="17.54" y="24.37" width="1.91" height="1.22" fill="#2e3a52" opacity="0.45"/><rect x="17.45" y="26.83" width="2.10" height="2.17" fill="#2e3a52" opacity="0.45"/><rect x="22.04" y="3.00" width="1.92" height="2.47" fill="#2e3a52" opacity="0.45"/><rect x="22.01" y="6.57" width="1.98" height="2.26" fill="#2e3a52" opacity="0.45"/><rect x="22.19" y="10.21" width="1.62" height="1.76" fill="#2e3a52" opacity="0.45"/><rect x="21.73" y="13.14" width="2.54" height="1.30" fill="#2e3a52" opacity="0.45"/><rect x="21.66" y="15.91" width="2.68" height="1.94" fill="#2e3a52" opacity="0.45"/><rect x="22.09" y="18.82" width="1.81" height="1.82" fill="#2e3a52" opacity="0.45"/><rect x="22.17" y="21.49" width="1.66" height="2.35" fill="#2e3a52" opacity="0.45"/><rect x="21.78" y="25.39" width="2.44" height="1.98" fill="#2e3a52" opacity="0.45"/><rect x="25.72" y="3.00" width="2.55" height="2.47" fill="#2e3a52" opacity="0.45"/><rect x="26.12" y="6.35" width="1.77" height="1.46" fill="#2e3a52" opacity="0.45"/><rect x="25.72" y="9.01" width="2.56" height="1.31" fill="#2e3a52" opacity="0.45"/><rect x="26.05" y="11.52" width="1.91" height="2.19" fill="#2e3a52" opacity="0.45"/><rect x="25.81" y="15.03" width="2.38" height="1.83" fill="#2e3a52" opacity="0.45"/><rect x="25.69" y="17.99" width="2.62" height="2.59" fill="#2e3a52" opacity="0.45"/><rect x="26.09" y="22.04" width="1.83" height="1.68" fill="#2e3a52" opacity="0.45"/><rect x="25.62" y="24.64" width="2.76" height="1.38" fill="#2e3a52" opacity="0.45"/></svg>
<div class="abs td" style="left:705.5px;top:553.5px;width:248.5px">千山鸟飞绝</div>
<div class="abs td" style="left:954px;top:553.5px;width:220px">FZ000327</div>
<div class="abs td" style="left:1174px;top:553.5px;width:153px">7</div>
<div class="abs td" style="left:1327px;top:553.5px;width:151.5px">11</div>
<div class="abs td" style="left:1478.5px;top:553.5px;width:200.5px">1.57</div>
<div class="abs td" style="left:1679px;top:553.5px;width:194px">2022-08-25</div>
<div class="abs cb" style="left:272px;top:615.0px"></div>
<div class="abs td" style="left:296.5px;top:600.5px;width:89.0px">265</div>
<div class="abs td" style="left:385.5px;top:600.5px;width:160.0px">下午钻区</div>
<svg class="abs" style="left:610px;top:609.0px" width="30" height="30" viewBox="0 0 30 30"><rect width="30" height="30" fill="#e2ded6"/><text x="21" y="12" font-size="9.5" font-weight="bold" text-anchor="middle" fill="#2e3a52" font-family="Liberation Serif">篤</text><text x="21" y="24" font-size="9.5" font-weight="bold" text-anchor="middle" fill="#2e3a52" font-family="Liberation Serif">行</text><text x="9" y="14" font-size="9.5" font-weight="bold" text-anchor="middle" fill="#2e3a52" font-family="Liberation Serif">致</text><text x="9" y="26" font-size="9.5" font-weight="bold" text-anchor="middle" fill="#2e3a52" font-family="Liberation Serif">遠</text></svg>
<div class="abs td" style="left:705.5px;top:600.5px;width:248.5px">笃行致远</div>
<div class="abs td" style="left:954px;top:600.5px;width:220px">FZ000328</div>
<div class="abs td" style="left:1174px;top:600.5px;width:153px">6</div>
<div class="abs td" style="left:1327px;top:600.5px;width:151.5px">9</div>
<div class="abs td" style="left:1478.5px;top:600.5px;width:200.5px">1.80</div>
<div class="abs td" style="left:1679px;top:600.5px;width:194px">2022-08-25</div>
<div class="abs cb" style="left:272px;top:662.0px"></div>
<div class="abs td" style="left:296.5px;top:647.5px;width:89.0px">264</div>
<div class="abs td" style="left:385.5px;top:647.5px;width:160.0px">下午钻区</div>
<svg class="abs" style="left:610px;top:656.0px" width="30" height="30" viewBox="0 0 30 30"><rect width="30" height="30" fill="#e2ded6"/><text x="14" y="13.5" font-size="13" font-weight="bold" text-anchor="middle" fill="#2e3a52" font-family="Liberation Serif">愛</text><text x="14" y="27" font-size="13" font-weight="bold" text-anchor="middle" fill="#2e3a52" font-family="Liberation Serif">國</text><rect x="25.44" y="4.00" width="2.11" height="2.10" fill="#2e3a52" opacity="0.5"/><rect x="25.28" y="7.47" width="2.44" height="1.29" fill="#2e3a52" opacity="0.5"/><rect x="25.60" y="9.87" width="1.80" height="2.05" fill="#2e3a52" opacity="0.5"/><rect x="25.50" y="12.99" width="2.00" height="1.57" fill="#2e3a52" opacity="0.5"/><rect x="1.62" y="16.00" width="2.76" height="1.86" fill="#2e3a52" opacity="0.35"/><rect x="1.83" y="19.13" width="2.34" height="1.51" fill="#2e3a52" opacity="0.35"/><rect x="1.88" y="21.86" width="2.23" height="1.40" fill="#2e3a52" opacity="0.35"/><rect x="1.88" y="24.07" width="2.24" height="1.72" fill="#2e3a52" opacity="0.35"/></svg>
<div class="abs td" style="left:705.5px;top:647.5px;width:248.5px">爱国</div>
<div class="abs td" style="left:954px;top:647.5px;width:220px">FZ000334</div>
<div class="abs td" style="left:1174px;top:647.5px;width:153px">1</div>
<div class="abs td" style="left:1327px;top:647.5px;width:151.5px">1</div>
<div class="abs td" style="left:1478.5px;top:647.5px;width:200.5px">1.00</div>
<div class="abs td" style="left:1679px;top:647.5px;width:194px">2022-08-25</div>
<div class="abs cb" style="left:272px;top:709.0px"></div>
<div class="abs td" style="left:296.5px;top:694.5px;width:89.0px">263</div>
<div class="abs td" style="left:385.5px;top:694.5px;width:160.0px">下午钻区</div>
<svg class="abs" style="left:610px;top:703.0px" width="30" height="30" viewBox="0 0 30 30"><rect width="30" height="30" fill="#e2ded6"/><rect x="3.91" y="3.00" width="2.19" height="1.58" fill="#2e3a52" opacity="0.45"/><rect x="4.16" y="5.45" width="1.69" height="1.67" fill="#2e3a52" opacity="0.45"/><rect x="4.13" y="7.93" width="1.74" height="1.60" fill="#2e3a52" opacity="0.45"/><rect x="4.18" y="10.58" width="1.64" height="2.24" fill="#2e3a52" opacity="0.45"/><rect x="3.72" y="14.12" width="2.55" height="1.39" fill="#2e3a52" opacity="0.45"/><rect x="3.69" y="16.89" width="2.62" height="1.50" fill="#2e3a52" opacity="0.45"/><rect x="3.96" y="19.76" width="2.09" height="1.30" fill="#2e3a52" opacity="0.45"/><rect x="4.10" y="22.43" width="1.81" height="2.49" fill="#2e3a52" opacity="0.45"/><rect x="3.62" y="25.92" width="2.76" height="2.29" fill="#2e3a52" opacity="0.45"/><rect x="8.25" y="3.00" width="2.50" height="1.33" fill="#2e3a52" opacity="0.45"/><rect x="8.17" y="5.38" width="2.65" height="1.74" fill="#2e3a52" opacity="0.45"/><rect x="8.18" y="8.52" width="2.64" height="2.13" fill="#2e3a52" opacity="0.45"/><rect x="8.31" y="12.03" width="2.37" height="2.33" fill="#2e3a52" opacity="0.45"/><rect x="8.15" y="15.64" width="2.69" height="1.28" fill="#2e3a52" opacity="0.45"/><rect x="8.32" y="18.45" width="2.35" height="1.69" fill="#2e3a52" opacity="0.45"/><rect x="8.33" y="20.96" width="2.35" height="1.90" fill="#2e3a52" opacity="0.45"/><rect x="8.20" y="23.89" width="2.60" height="1.78" fill="#2e3a52" opacity="0.45"/><rect x="8.65" y="26.59" width="1.70" height="1.84" fill="#2e3a52" opacity="0.45"/><rect x="12.83" y="3.00" width="2.33" height="2.44" fill="#2e3a52" opacity="0.45"/><rect x="12.81" y="6.26" width="2.39" height="2.40" fill="#2e3a52" opacity="0.45"/><rect x="13.02" y="9.88" width="1.96" height="1.60" fill="#2e3a52" opacity="0.45"/><rect x="13.17" y="12.43" width="1.66" height="2.07" fill="#2e3a52" opacity="0.45"/><rect x="12.83" y="16.05" width="2.35" height="1.34" fill="#2e3a52" opacity="0.45"/><rect x="13.03" y="18.66" width="1.93" height="1.71" fill="#2e3a52" opacity="0.45"/><rect x="12.62" y="21.52" width="2.77" height="1.66" fill="#2e3a52" opacity="0.45"/><rect x="12.80" y="24.49" width="2.40" height="1.93" fill="#2e3a52" opacity="0.45"/><rect x="17.69" y="3.00" width="1.63" height="1.41" fill="#2e3a52" opacity="0.45"/><rect x="17.64" y="5.98" width="1.71" height="2.38" fill="#2e3a52" opacity="0.45"/><rect x="17.16" y="9.65" width="2.67" height="2.30" fill="#2e3a52" opacity="0.45"/><rect x="17.46" y="12.81" width="2.07" height="1.39" fill="#2e3a52" opacity="0.45"/><rect x="17.28" y="15.47" width="2.43" height="1.32" fill="#2e3a52" opacity="0.45"/><rect x="17.19" y="18.19" width="2.62" height="1.83" fill="#2e3a52" opacity="0.45"/><rect x="17.47" y="21.13" width="2.06" height="2.37" fill="#2e3a52" opacity="0.45"/><rect x="17.27" y="24.62" width="2.45" height="1.73" fill="#2e3a52" opacity="0.45"/><rect x="21.85" y="3.00" width="2.31" height="1.30" fill="#2e3a52" opacity="0.45"/><rect x="22.06" y="5.77" width="1.88" height="2.17" fill="#2e3a52" opacity="0.45"/><rect x="22.07" y="9.03" width="1.86" height="2.44" fill="#2e3a52" opacity="0.45"/><rect x="21.89" y="13.03" width="2.22" height="1.75" fill="#2e3a52" opacity="0.45"/><rect x="21.85" y="16.15" width="2.31" height="2.15" fill="#2e3a52" opacity="0.45"/><rect x="21.65" y="19.80" width="2.70" height="2.10" fill="#2e3a52" opacity="0.45"/><rect x="22.17" y="23.21" width="1.67" height="2.02" fill="#2e3a52" opacity="0.45"/><rect x="22.06" y="26.76" width="1.87" height="1.52" fill="#2e3a52" opacity="0.45"/><rect x="25.98" y="3.00" width="2.04" height="2.07" fill="#2e3a52" opacity="0.45"/><rect x="25.63" y="6.39" width="2.73" height="2.34" fill="#2e3a52" opacity="0.45"/><rect x="25.97" y="10.17" width="2.06" height="2.37" fill="#2e3a52" opacity="0.45"/><rect x="25.60" y="13.39" width="2.79" height="2.28" fill="#2e3a52" opacity="0.45"/><rect x="25.86" y="16.84" width="2.28" height="2.46" fill="#2e3a52" opacity="0.45"/><rect x="26.16" y="20.40" width="1.67" height="2.36" fill="#2e3a52" opacity="0.45"/><rect x="26.15" y="23.86" width="1.70" height="2.17" fill="#2e3a52" opacity="0.45"/></svg>
<div class="abs td" style="left:705.5px;top:694.5px;width:248.5px">江山代有人才出</div>
<div class="abs td" style="left:954px;top:694.5px;width:220px">FZ000332</div>
<div class="abs td" style="left:1174px;top:694.5px;width:153px">7</div>
<div class="abs td" style="left:1327px;top:694.5px;width:151.5px">8</div>
<div class="abs td" style="left:1478.5px;top:694.5px;width:200.5px">1.14</div>
<div class="abs td" style="left:1679px;top:694.5px;width:194px">2022-08-25</div>
<div class="abs cb" style="left:272px;top:756.0px"></div>
<div class="abs td" style="left:296.5px;top:741.5px;width:89.0px">262</div>
<div class="abs td" style="left:385.5px;top:741.5px;width:160.0px">下午钻区</div>
<svg class="abs" style="left:610px;top:750.0px" width="30" height="30" viewBox="0 0 30 30"><rect width="30" height="30" fill="#e2ded6"/><text x="14" y="13.5" font-size="13" font-weight="bold" text-anchor="middle" fill="#2e3a52" font-family="Liberation Serif">敬</text><text x="14" y="27" font-size="13" font-weight="bold" text-anchor="middle" fill="#2e3a52" font-family="Liberation Serif">業</text><rect x="25.67" y="4.00" width="1.67" height="2.57" fill="#2e3a52" opacity="0.5"/><rect x="25.13" y="7.95" width="2.73" height="1.88" fill="#2e3a52" opacity="0.5"/><rect x="25.60" y="10.95" width="1.79" height="2.49" fill="#2e3a52" opacity="0.5"/><rect x="2.09" y="16.00" width="1.82" height="1.78" fill="#2e3a52" opacity="0.35"/><rect x="2.18" y="18.86" width="1.64" height="2.08" fill="#2e3a52" opacity="0.35"/><rect x="2.16" y="22.05" width="1.68" height="1.22" fill="#2e3a52" opacity="0.35"/><rect x="2.04" y="24.20" width="1.93" height="1.52" fill="#2e3a52" opacity="0.35"/></svg>
<div class="abs td" style="left:705.5px;top:741.5px;width:248.5px">敬业</div>
<div class="abs td" style="left:954px;top:741.5px;width:220px">FZ000333</div>
<div class="abs td" style="left:1174px;top:741.5px;width:153px">4</div>
<div class="abs td" style="left:1327px;top:741.5px;width:151.5px">3</div>
<div class="abs td" style="left:1478.5px;top:741.5px;width:200.5px">0.75</div>
<div class="abs td" style="left:1679px;top:741.5px;width:194px">2022-08-25</div>
<div class="abs cb" style="left:272px;top:803.0px"></div>
<div class="abs td" style="left:296.5px;top:788.5px;width:89.0px">261</div>
<div class="abs td" style="left:385.5px;top:788.5px;width:160.0px">下午钻区</div>
<svg class="abs" style="left:610px;top:797.0px" width="30" height="30" viewBox="0 0 30 30"><rect width="30" height="30" fill="#e2ded6"/><text x="14" y="13.5" font-size="13" font-weight="bold" text-anchor="middle" fill="#2e3a52" font-family="Liberation Serif">悟</text><text x="14" y="27" font-size="13" font-weight="bold" text-anchor="middle" fill="#2e3a52" font-family="Liberation Serif">道</text><rect x="25.14" y="4.00" width="2.72" height="1.51" fill="#2e3a52" opacity="0.5"/><rect x="25.19" y="7.07" width="2.62" height="1.23" fill="#2e3a52" opacity="0.5"/><rect x="25.69" y="9.67" width="1.61" height="2.15" fill="#2e3a52" opacity="0.5"/><rect x="25.22" y="13.29" width="2.57" height="1.73" fill="#2e3a52" opacity="0.5"/><rect x="1.76" y="16.00" width="2.47" height="2.27" fill="#2e3a52" opacity="0.35"/><rect x="1.62" y="19.34" width="2.76" height="2.14" fill="#2e3a52" opacity="0.35"/><rect x="2.14" y="22.99" width="1.72" height="2.47" fill="#2e3a52" opacity="0.35"/></svg>
<div class="abs td" style="left:705.5px;top:788.5px;width:248.5px">悟道</div>
<div class="abs td" style="left:954px;top:788.5px;width:220px">FZ000349</div>
<div class="abs td" style="left:1174px;top:788.5px;width:153px">13</div>
<div class="abs td" style="left:1327px;top:788.5px;width:151.5px">10</div>
<div class="abs td" style="left:1478.5px;top:788.5px;width:200.5px">0.77</div>
<div class="abs td" style="left:1679px;top:788.5px;width:194px">2022-08-25</div>
<div class="abs cb" style="left:272px;top:850.0px"></div>
<div class="abs td" style="left:296.5px;top:835.5px;width:89.0px">260</div>
<div class="abs td" style="left:385.5px;top:835.5px;width:160.0px">下午钻区</div>
<svg class="abs" style="left:610px;top:844.0px" width="30" height="30" viewBox="0 0 30 30"><rect width="30" height="30" fill="#e2ded6"/><rect x="3.94" y="3.00" width="2.12" height="1.30" fill="#2e3a52" opacity="0.45"/><rect x="4.05" y="5.30" width="1.91" height="1.82" fill="#2e3a52" opacity="0.45"/><rect x="3.75" y="8.61" width="2.49" height="1.98" fill="#2e3a52" opacity="0.45"/><rect x="3.92" y="12.14" width="2.16" height="1.89" fill="#2e3a52" opacity="0.45"/><rect x="4.16" y="14.93" width="1.68" height="2.30" fill="#2e3a52" opacity="0.45"/><rect x="3.76" y="18.32" width="2.47" height="1.43" fill="#2e3a52" opacity="0.45"/><rect x="3.88" y="20.92" width="2.23" height="1.91" fill="#2e3a52" opacity="0.45"/><rect x="3.98" y="24.30" width="2.04" height="2.57" fill="#2e3a52" opacity="0.45"/><rect x="8.28" y="3.00" width="2.44" height="2.19" fill="#2e3a52" opacity="0.45"/><rect x="8.51" y="6.78" width="1.98" height="1.49" fill="#2e3a52" opacity="0.45"/><rect x="8.53" y="9.45" width="1.95" height="1.63" fill="#2e3a52" opacity="0.45"/><rect x="8.12" y="12.04" width="2.76" height="2.49" fill="#2e3a52" opacity="0.45"/><rect x="8.46" y="16.03" width="2.09" height="2.31" fill="#2e3a52" opacity="0.45"/><rect x="8.69" y="19.39" width="1.62" height="1.76" fill="#2e3a52" opacity="0.45"/><rect x="8.45" y="22.05" width="2.10" height="1.86" fill="#2e3a52" opacity="0.45"/><rect x="8.64" y="25.23" width="1.72" height="1.99" fill="#2e3a52" opacity="0.45"/><rect x="12.91" y="3.00" width="2.17" height="1.80" fill="#2e3a52" opacity="0.45"/><rect x="12.65" y="5.89" width="2.70" height="1.71" fill="#2e3a52" opacity="0.45"/><rect x="12.65" y="9.18" width="2.70" height="1.46" fill="#2e3a52" opacity="0.45"/><rect x="13.03" y="12.09" width="1.94" height="2.35" fill="#2e3a52" opacity="0.45"/><rect x="12.92" y="15.96" width="2.15" height="2.01" fill="#2e3a52" opacity="0.45"/><rect x="13.10" y="18.80" width="1.81" height="1.92" fill="#2e3a52" opacity="0.45"/><rect x="12.99" y="21.75" width="2.01" height="2.41" fill="#2e3a52" opacity="0.45"/><rect x="13.13" y="25.62" width="1.74" height="1.71" fill="#2e3a52" opacity="0.45"/><rect x="17.61" y="3.00" width="1.78" height="1.43" fill="#2e3a52" opacity="0.45"/><rect x="17.59" y="5.77" width="1.82" height="2.18" fill="#2e3a52" opacity="0.45"/><rect x="17.64" y="9.33" width="1.72" height="1.95" fill="#2e3a52" opacity="0.45"/><rect x="17.15" y="12.16" width="2.69" height="2.18" fill="#2e3a52" opacity="0.45"/><rect x="17.66" y="15.80" width="1.68" height="2.04" fill="#2e3a52" opacity="0.45"/><rect x="17.23" y="19.24" width="2.54" height="1.29" fill="#2e3a52" opacity="0.45"/><rect x="17.41" y="21.39" width="2.18" height="2.56" fill="#2e3a52" opacity="0.45"/><rect x="17.54" y="24.93" width="1.92" height="1.34" fill="#2e3a52" opacity="0.45"/><rect x="22.15" y="3.00" width="1.69" height="1.58" fill="#2e3a52" opacity="0.45"/><rect x="22.10" y="5.98" width="1.80" height="1.44" fill="#2e3a52" opacity="0.45"/><rect x="22.05" y="8.38" width="1.89" height="1.40" fill="#2e3a52" opacity="0.45"/><rect x="22.13" y="10.64" width="1.74" height="1.22" fill="#2e3a52" opacity="0.45"/><rect x="21.70" y="12.98" width="2.60" height="2.49" fill="#2e3a52" opacity="0.45"/><rect x="21.64" y="16.71" width="2.72" height="1.43" fill="#2e3a52" opacity="0.45"/><rect x="21.86" y="19.15" width="2.27" height="1.93" fill="#2e3a52" opacity="0.45"/><rect x="21.66" y="22.21" width="2.68" height="1.52" fill="#2e3a52" opacity="0.45"/><rect x="21.79" y="24.62" width="2.43" height="1.68" fill="#2e3a52" opacity="0.45"/><rect x="26.15" y="3.00" width="1.70" height="1.23" fill="#2e3a52" opacity="0.45"/><rect x="25.98" y="5.61" width="2.04" height="1.93" fill="#2e3a52" opacity="0.45"/><rect x="26.08" y="9.02" width="1.84" height="2.11" fill="#2e3a52" opacity="0.45"/><rect x="25.96" y="12.09" width="2.09" height="2.45" fill="#2e3a52" opacity="0.45"/><rect x="25.64" y="15.78" width="2.73" height="1.71" fill="#2e3a52" opacity="0.45"/><rect x="25.96" y="18.77" width="2.09" height="2.36" fill="#2e3a52" opacity="0.45"/><rect x="26.13" y="22.47" width="1.75" height="1.31" fill="#2e3a52" opacity="0.45"/><rect x="25.63" y="24.82" width="2.75" height="1.60" fill="#2e3a52" opacity="0.45"/></svg>
<div class="abs td" style="left:705.5px;top:835.5px;width:248.5px">君自故乡来</div>
<div class="abs td" style="left:954px;top:835.5px;width:220px">FZ000326</div>
<div class="abs td" style="left:1174px;top:835.5px;width:153px">6</div>
<div class="abs td" style="left:1327px;top:835.5px;width:151.5px">29</div>
<div class="abs td" style="left:1478.5px;top:835.5px;width:200.5px">4.83</div>
<div class="abs td" style="left:1679px;top:835.5px;width:194px">2022-08-25</div>
<div class="abs" style="left:260px;top:900px;line-height:18px;white-space:nowrap">显示第 1 到第 10 条记录，总共 263 条记录 每页显示</div>
<div class="abs btn" style="left:568px;top:894px;width:50px;height:32px;line-height:30px;font-size:12px;padding-right:10px">10</div>
<svg class="abs" style="left:597px;top:908px" width="8" height="5" viewBox="0 0 8 5"><path d="M0,5 H8 L4,0Z" fill="#333"/></svg>
<div class="abs" style="left:622px;top:900px;line-height:18px">条记录</div>
<div class="abs pg" style="left:1398px;width:65px;font-size:13px;border-radius:3px 0 0 3px;">上一页</div>
<div class="abs pg" style="left:1462px;width:34px;background:#2c3e50;border-color:#2c3e50;color:#fff;">1</div>
<div class="abs pg" style="left:1495px;width:32.5px;">2</div>
<div class="abs pg" style="left:1526.5px;width:33.0px;">3</div>
<div class="abs pg" style="left:1558.5px;width:33.0px;">4</div>
<div class="abs pg" style="left:1590.5px;width:33.5px;">5</div>
<div class="abs pg" style="left:1623px;width:37.5px;background:#fff;color:#999;">...</div>
<div class="abs pg" style="left:1659.5px;width:40.0px;">27</div>
<div class="abs pg" style="left:1698.5px;width:65.0px;font-size:13px;border-radius:0 3px 3px 0;">下一页</div>
<div class="abs" style="left:1768px;top:893px;width:50px;height:31px;border:1px solid #ccc;background:#fff"></div>
<div class="abs btn" style="left:1823px;top:894px;width:50px;height:30px;line-height:28px">跳转</div>
</body></html>
